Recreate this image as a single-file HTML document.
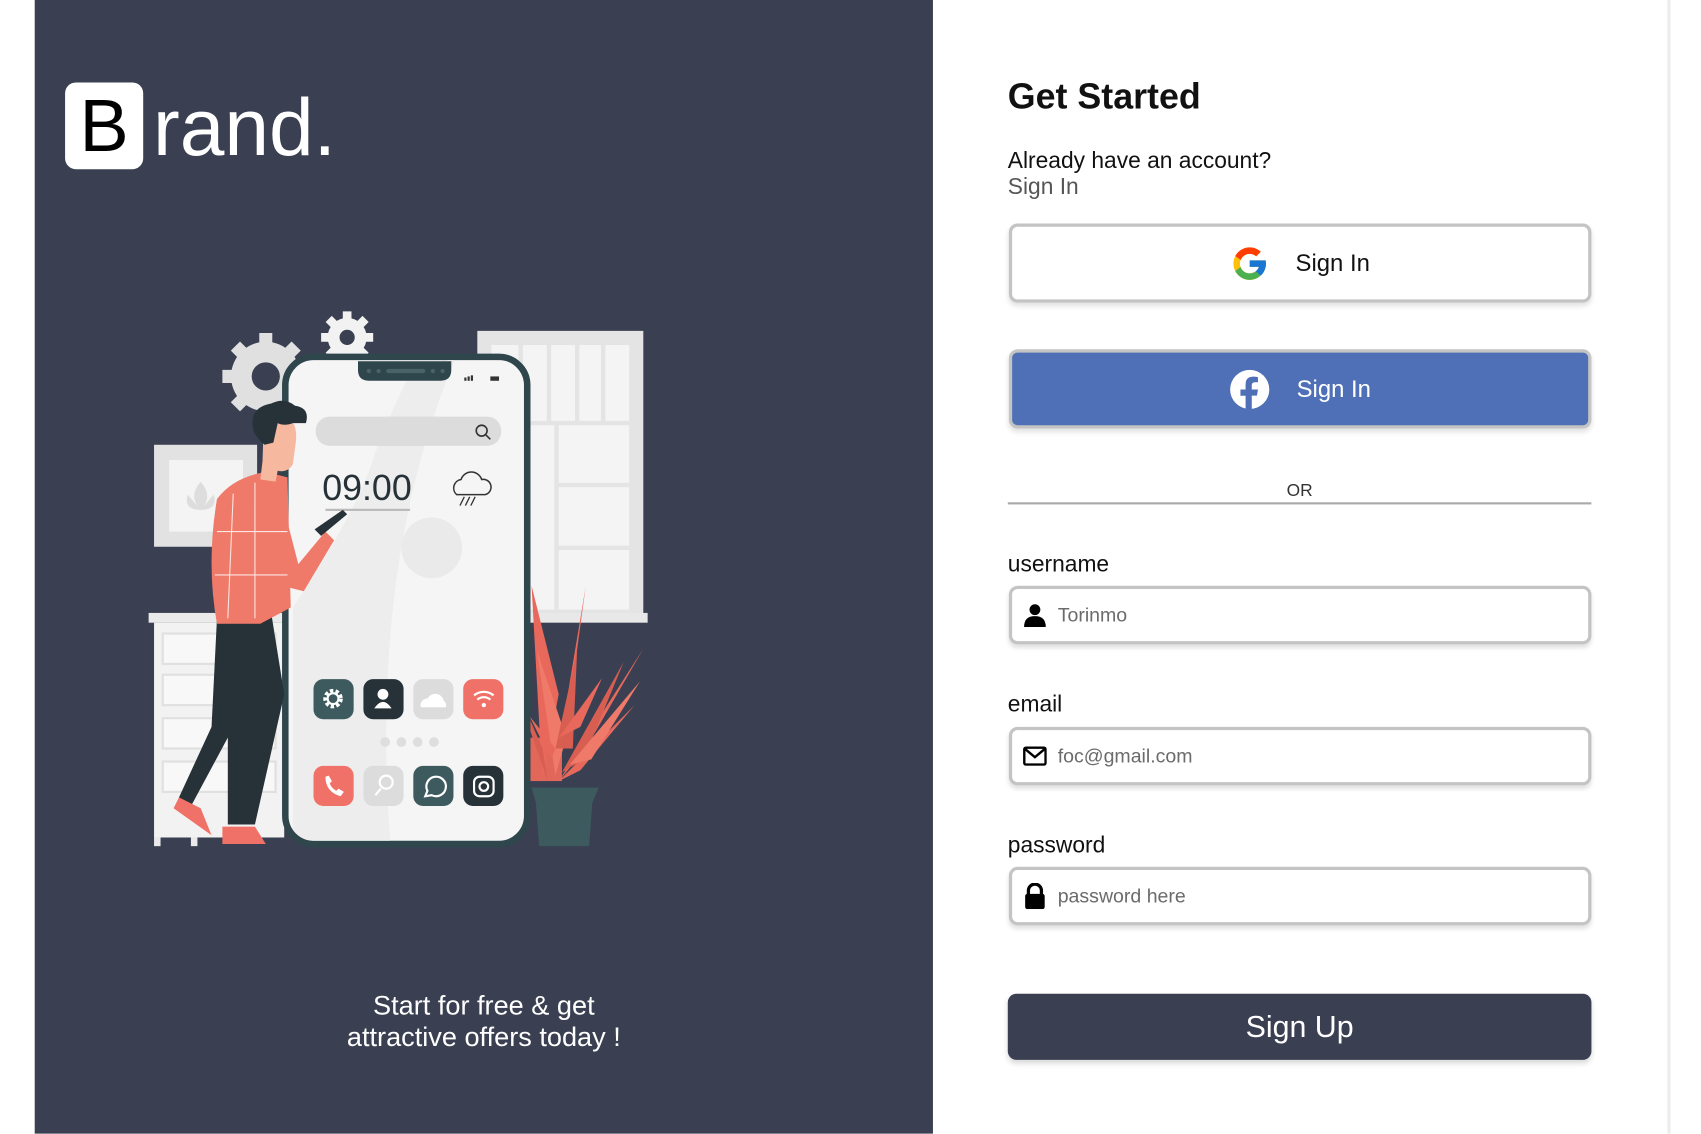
<!DOCTYPE html>
<html><head><meta charset="utf-8"><style>
*{margin:0;padding:0;box-sizing:border-box}
html,body{width:1701px;height:1134px;overflow:hidden;background:#fff;font-family:"Liberation Sans",Arial,sans-serif}
#w{position:absolute;left:0;top:0;width:1568px;height:1045px;transform:scale(1.08482);transform-origin:0 0}
.abs{position:absolute}
#panel{left:32px;top:0;width:828px;height:1045px;background:#3a4051}
#edge{left:1537px;top:0;width:3px;height:1045px;background:#ececec}
.btn{position:absolute;left:930px;width:537px;height:73px;border:3px solid #c4c4c4;border-radius:8px;box-shadow:0 3px 5px rgba(0,0,0,.12);font-size:22px;display:flex;align-items:center;justify-content:center}
.btn span{margin-left:24px}
.lbl{position:absolute;left:929px;font-size:21px;color:#111}
.inp{position:absolute;left:930px;width:537px;height:54px;border:3px solid #c4c4c4;border-radius:8px;box-shadow:0 3px 4px rgba(0,0,0,.12);font-size:18px;color:#6b6b6b;display:flex;align-items:center;padding-left:10px}
.inp svg{margin-right:10px}
</style></head><body><div id="w">
<div id="panel" class="abs"></div>
<div id="edge" class="abs"></div>

<div class="abs" style="left:60px;top:76px;width:72px;height:80px;background:#fff;border-radius:10px;color:#000;font-size:68px;line-height:80px;text-align:center">B</div>
<div class="abs" style="left:141px;top:72px;color:#fff;font-size:74px;line-height:92px;letter-spacing:0px">rand.</div>

<svg class="abs" style="left:130px;top:280px" width="480" height="510" viewBox="130 280 480 510">
 <defs><clipPath id="ph"><rect x="266" y="332" width="217" height="443" rx="23"/></clipPath></defs>
 <!-- window -->
 <rect x="440" y="305" width="153" height="265" fill="#e4e4e4"/>
 <rect x="453" y="318" width="127" height="244" fill="#f4f4f4"/>
 <g stroke="#e4e4e4" stroke-width="4"><line x1="480" y1="318" x2="480" y2="390"/><line x1="506" y1="318" x2="506" y2="390"/><line x1="532" y1="318" x2="532" y2="390"/><line x1="556" y1="318" x2="556" y2="390"/><line x1="453" y1="390" x2="580" y2="390"/><line x1="513" y1="390" x2="513" y2="562"/><line x1="513" y1="447" x2="580" y2="447"/><line x1="513" y1="505" x2="580" y2="505"/></g>
 <rect x="436" y="565" width="161" height="9" fill="#e8e8e8"/>
 <!-- frame -->
 <rect x="142" y="410" width="95" height="94" fill="#e2e2e2"/>
 <rect x="156" y="424" width="68" height="66" fill="#f4f4f4"/>
 <path d="M185 470 q-12 -12 0 -26 q12 14 0 26z M185 470 q-16 0 -12 -14z M185 470 q16 0 12 -14z" fill="#ddd"/>
 <!-- dresser -->
 <rect x="137" y="565" width="130" height="9" fill="#eaeaea"/>
 <rect x="142" y="574" width="120" height="198" fill="#f2f2f2"/>
 <g fill="#f8f8f8" stroke="#e0e0e0" stroke-width="2"><rect x="150" y="584" width="104" height="28"/><rect x="150" y="622" width="104" height="28"/><rect x="150" y="662" width="104" height="28"/><rect x="150" y="702" width="104" height="28"/></g>
 <rect x="142" y="772" width="6" height="8" fill="#eaeaea"/><rect x="176" y="772" width="6" height="8" fill="#eaeaea"/>
 <!-- gears -->
 <g fill="#e0e0e0"><circle cx="245" cy="347" r="32"/><g stroke="#e0e0e0" stroke-width="12"><line x1="245" y1="307" x2="245" y2="387"/><line x1="205" y1="347" x2="285" y2="347"/><line x1="217" y1="319" x2="273" y2="375"/><line x1="273" y1="319" x2="217" y2="375"/></g></g>
 <circle cx="245" cy="347" r="13" fill="#3a4051"/>
 <g fill="#f2f2f2"><circle cx="320" cy="311" r="18"/><g stroke="#f2f2f2" stroke-width="8"><line x1="320" y1="287" x2="320" y2="335"/><line x1="296" y1="311" x2="344" y2="311"/><line x1="303" y1="294" x2="337" y2="328"/><line x1="337" y1="294" x2="303" y2="328"/></g></g>
 <circle cx="320" cy="311" r="7" fill="#3a4051"/>
 <!-- plant -->
 <rect x="488" y="680" width="30" height="40" fill="#e0675a"/>
 <g fill="#e8695c">
  <path d="M500 720 L490 540 L515 640z"/><path d="M510 720 L540 540 L525 650z"/><path d="M515 720 L593 598 L540 690z"/>
  <path d="M515 720 L585 650 L535 710z"/><path d="M505 720 L470 620 L500 690z" fill="#d95e52"/><path d="M520 720 L560 560 L530 680z" fill="#f07a6a"/>
  <path d="M512 715 L495 600 L522 680z" fill="#f07a6a"/><path d="M518 712 L575 610 L538 700z" fill="#d95e52"/>
  <path d="M508 700 L488 660 L512 690z"/><path d="M525 705 L590 628 L545 700z" fill="#f07a6a"/>
  <path d="M512 690 L532 600 L528 690z" fill="#d95e52"/><path d="M515 680 L555 625 L535 670z"/>
 </g>
 <path d="M490 726 L552 726 L546 740 L543 780 L497 780 L494 740z" fill="#3d5a5e"/>
 <!-- phone -->
 <rect x="263" y="329" width="223" height="449" rx="26" fill="#f5f5f5" stroke="#2e464c" stroke-width="6"/>
 <path clip-path="url(#ph)" d="M270 560 Q330 470 345 420 Q360 380 380 340 L420 330 Q340 520 360 780 L270 780z" fill="#ededed"/>
 <path d="M330 333 h86 v8 q0 10 -10 10 h-66 q-10 0 -10 -10z" fill="#2e464c"/>
 <rect x="356" y="340" width="36" height="4" rx="2" fill="#4a6368"/>
 <g fill="#4a6368"><circle cx="340" cy="342" r="2"/><circle cx="349" cy="342" r="2"/><circle cx="399" cy="342" r="2"/><circle cx="408" cy="342" r="2"/></g>
 <g fill="#333"><rect x="428" y="348" width="2" height="3"/><rect x="431" y="347" width="2" height="4"/><rect x="434" y="346" width="2" height="5"/><rect x="452" y="347" width="8" height="4"/></g>
 <rect x="291" y="384" width="171" height="27" rx="13" fill="#dcdcdc"/>
 <circle cx="444" cy="397" r="5" fill="none" stroke="#333" stroke-width="1.5"/><line x1="448" y1="401" x2="452" y2="405" stroke="#333" stroke-width="1.5"/>
 <text x="297" y="461" font-family="Liberation Sans,sans-serif" font-size="33" fill="#263238">09:00</text>
 <line x1="300" y1="470" x2="378" y2="470" stroke="#bbb" stroke-width="2"/>
 <path d="M421 456 a8 8 0 0 1 4 -14 a10 10 0 0 1 19 0 a7 7 0 0 1 3 14z" fill="none" stroke="#333" stroke-width="1.4"/>
 <g stroke="#333" stroke-width="1.2"><line x1="428" y1="458" x2="424" y2="466"/><line x1="433" y1="458" x2="429" y2="466"/><line x1="438" y1="458" x2="434" y2="466"/></g>
 <circle cx="398" cy="505" r="28" fill="#eaeaea"/>
 <rect x="289" y="626" width="37" height="37" rx="9" fill="#3d5a5e"/><circle cx="307" cy="644" r="7" fill="none" stroke="#fff" stroke-width="4" stroke-dasharray="3 2"/><circle cx="307" cy="644" r="5" fill="none" stroke="#fff" stroke-width="2"/>
 <rect x="335" y="626" width="37" height="37" rx="9" fill="#263238"/><circle cx="353" cy="640" r="5" fill="#fff"/><path d="M345 653 q8 -12 16 0z" fill="#fff"/>
 <rect x="381" y="626" width="37" height="37" rx="9" fill="#dcdcdc"/><path d="M388 652 a6 6 0 0 1 6 -8 a8 8 0 0 1 15 2 a5 5 0 0 1 2 6z" fill="#fff"/>
 <rect x="427" y="626" width="37" height="37" rx="9" fill="#f07167"/><g fill="none" stroke="#fff" stroke-width="2"><path d="M437 641 a14 14 0 0 1 18 0"/><path d="M440 645 a9 9 0 0 1 12 0"/></g><circle cx="446" cy="650" r="2" fill="#fff"/>
 <g fill="#dedede"><circle cx="355" cy="684" r="4.5"/><circle cx="370" cy="684" r="4.5"/><circle cx="385" cy="684" r="4.5"/><circle cx="400" cy="684" r="4.5"/></g>
 <rect x="289" y="706" width="37" height="37" rx="9" fill="#f07167"/><path d="M300 716 q0 14 14 18 l3 -4 l-5 -3 l-2 2 q-5 -3 -6 -7 l2 -2 l-3 -5z" fill="#fff"/>
 <rect x="335" y="706" width="37" height="37" rx="9" fill="#dcdcdc"/><circle cx="356" cy="721" r="6" fill="none" stroke="#fff" stroke-width="2"/><line x1="351" y1="727" x2="346" y2="733" stroke="#fff" stroke-width="2"/>
 <rect x="381" y="706" width="37" height="37" rx="9" fill="#3d5a5e"/><path d="M392 734 l2 -5 a9 9 0 1 1 4 4z" fill="none" stroke="#fff" stroke-width="2"/>
 <rect x="427" y="706" width="37" height="37" rx="9" fill="#263238"/><rect x="437" y="716" width="18" height="18" rx="5" fill="none" stroke="#fff" stroke-width="2"/><circle cx="446" cy="725" r="4" fill="none" stroke="#fff" stroke-width="2"/>
 <!-- person -->
 <path d="M200 570 L250 565 L262 640 L235 760 L210 760 L210 680 L175 745 L165 735 L195 670z" fill="#263238"/>
 <path d="M165 735 L185 745 L195 770 L160 745z" fill="#f07167"/><path d="M205 762 L235 762 L245 778 L205 778z" fill="#f07167"/>
 <path d="M200 460 Q215 440 245 435 L265 440 L268 560 L240 575 L200 575 Q190 520 200 460z" fill="#f07a6a"/>
 <path d="M262 470 L275 520 L300 490 L308 498 L280 545 L260 540z" fill="#f07a6a"/>
 <path d="M290 488 L316 470 L320 474 L296 494z" fill="#263238"/>
 <path d="M243 395 Q243 382 258 382 Q274 384 273 405 L270 428 Q265 436 256 434 L254 444 L240 442 L242 425z" fill="#f6b9a0"/>
 <path d="M234 398 Q228 376 250 372 Q262 366 272 374 Q286 376 282 390 L270 390 Q262 393 256 390 L252 408 L244 410 Q238 406 234 398z" fill="#263238"/>
 <g stroke="#fff" stroke-width="1" opacity=".8"><line x1="215" y1="455" x2="210" y2="570"/><line x1="235" y1="445" x2="235" y2="570"/><line x1="200" y1="490" x2="265" y2="490"/><line x1="198" y1="530" x2="265" y2="530"/></g>
</svg>

<div class="abs" style="left:270px;top:913px;width:352px;text-align:center;color:#fff;font-size:25px;line-height:29px">Start for free &amp; get<br>attractive offers today !</div>

<div class="abs" style="left:929px;top:70px;font-size:33px;font-weight:bold;color:#111">Get Started</div>
<div class="abs" style="left:929px;top:137px;font-size:21px;color:#111">Already have an account?</div>
<div class="abs" style="left:929px;top:161px;font-size:21px;color:#555">Sign In</div>

<div class="btn" style="top:206px;background:#fff;color:#111">
 <svg width="36" height="36" viewBox="0 0 48 48"><path fill="#FFC107" d="M43.6 20H24v8h11.3C33.7 32.7 29.2 36 24 36c-6.6 0-12-5.4-12-12s5.4-12 12-12c3.1 0 5.8 1.2 7.9 3.1l5.7-5.7C34 6.1 29.3 4 24 4 13 4 4 13 4 24s9 20 20 20 20-9 20-20c0-1.3-.1-2.7-.4-4z"/><path fill="#FF3D00" d="M6.3 14.7l6.6 4.8C14.7 15.1 19 12 24 12c3.1 0 5.8 1.2 7.9 3.1l5.7-5.7C34 6.1 29.3 4 24 4 16.3 4 9.7 8.3 6.3 14.7z"/><path fill="#4CAF50" d="M24 44c5.2 0 9.9-2 13.4-5.2l-6.2-5.2C29.2 35.1 26.7 36 24 36c-5.2 0-9.6-3.3-11.3-7.9l-6.5 5C9.5 39.6 16.2 44 24 44z"/><path fill="#1976D2" d="M43.6 20H24v8h11.3c-.8 2.2-2.2 4.2-4.1 5.6l6.2 5.2C37 39.2 44 34 44 24c0-1.3-.1-2.7-.4-4z"/></svg>
 <span>Sign In</span></div>
<div class="btn" style="top:322px;background:#4f70b6;color:#fff">
 <svg width="38" height="38" viewBox="0 0 40 40"><circle cx="20" cy="20" r="19" fill="#fff"/><path d="M22 40 V26 h5 l1 -6 h-6 v-4 q0 -3 3 -3 h3 v-5 q-2 -.4 -4.5 -.4 q-7.5 0 -7.5 7.5 v5 h-5 v6 h5 v14z" fill="#4f70b6"/></svg>
 <span>Sign In</span></div>

<div class="abs" style="left:929px;top:444px;width:538px;text-align:center;font-size:16px;color:#333">OR</div>
<div class="abs" style="left:929px;top:463px;width:538px;height:2px;background:#aaa"></div>

<div class="lbl" style="top:509px">username</div>
<div class="inp" style="top:540px"><svg width="22" height="22" viewBox="0 0 22 22"><circle cx="11" cy="6" r="5"/><path d="M1 22 q0 -10 10 -10 q10 0 10 10z"/></svg>Torinmo</div>
<div class="lbl" style="top:638px">email</div>
<div class="inp" style="top:670px"><svg width="22" height="18" viewBox="0 0 22 18"><rect x="1.2" y="1.2" width="19.6" height="15.6" rx="1.5" fill="none" stroke="#000" stroke-width="2.2"/><path d="M1.5 2 L11 10 L20.5 2" fill="none" stroke="#000" stroke-width="2.2"/></svg>foc@gmail.com</div>
<div class="lbl" style="top:768px">password</div>
<div class="inp" style="top:799px"><svg width="22" height="24" viewBox="0 0 22 24"><path d="M5 11 V7 a6 6 0 0 1 12 0 V11" fill="none" stroke="#000" stroke-width="3"/><rect x="2" y="10" width="18" height="14" rx="2"/></svg>password here</div>

<div class="abs" style="left:929px;top:916px;width:538px;height:61px;background:#3a4051;border-radius:8px;box-shadow:0 3px 5px rgba(0,0,0,.15);color:#fff;font-size:28px;display:flex;align-items:center;justify-content:center">Sign Up</div>
</div></body></html>
